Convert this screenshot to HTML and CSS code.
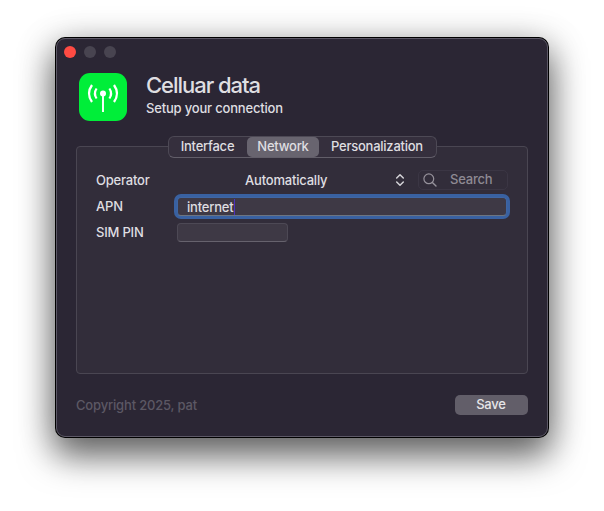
FILE: index.html
```html
<!DOCTYPE html>
<html lang="en">
<head>
<meta charset="utf-8">
<title>Celluar data</title>
<link rel="stylesheet" href="styles.css">
</head>
<body>
<main class="window">
  <div class="lights"><i class="light close"></i><i class="light"></i><i class="light"></i></div>
  <header class="header">
    <svg class="logo" viewBox="0 0 48 48" width="48" height="48">
      <rect width="48" height="48" rx="11" fill="#00ee39"/>
      <g fill="none" stroke="#fff" stroke-width="2">
        <path d="M24 20V39" stroke-width="1.9"/>
        <path d="M17.600 15.500Q14.200 20.500 17.600 25.500M30.400 15.500Q33.800 20.500 30.400 25.500" stroke-width="2.200"/>
        <path d="M13 12Q7 20.500 13 29M35 12Q41 20.500 35 29" stroke-width="2.300"/>
      </g>
      <circle cx="24" cy="20.500" r="3" fill="#fff"/>
    </svg>
    <div class="titles">
      <h1>Celluar data</h1>
      <p>Setup your connection</p>
    </div>
  </header>
  <section class="panel">
    <nav class="tabs">
      <span class="tab interface">Interface</span>
      <span class="tab active">Network</span>
      <span class="tab personal">Personalization</span>
    </nav>
    <div class="form">
      <div class="row">
        <label class="label">Operator</label>
        <div class="select">
          <span>Automatically</span>
          <svg viewBox="0 0 10 14" width="10" height="14"><path d="M1.700 5L5 1.800L8.300 5M1.700 9L5 12.200L8.300 9" fill="none" stroke="#d5d4d8" stroke-width="1.500" stroke-linecap="round" stroke-linejoin="round"/></svg>
        </div>
        <div class="search">
          <svg viewBox="0 0 14 14" width="14" height="14"><path d="M9.400 9.400L13 13" stroke="#96929b" stroke-width="1.400" stroke-linecap="round"/><circle cx="5.800" cy="5.800" r="4.900" fill="none" stroke="#96929b" stroke-width="1.200"/></svg>
          <span>Search</span>
        </div>
      </div>
      <div class="row">
        <label class="label">APN</label>
        <div class="input focused"><span>internet</span><i class="caret"></i></div>
      </div>
      <div class="row">
        <label class="label">SIM PIN</label>
        <div class="input"></div>
      </div>
    </div>
  </section>
  <footer class="footer">
    <span class="copyright">Copyright 2025, pat</span>
    <button class="save">Save</button>
  </footer>
</main>
</body>
</html>
```
FILE: styles.css
```css
* { box-sizing: border-box; }
body {
  margin: 0;
  height: 511px;
  overflow: hidden;
  padding: 38px 56px;
  background: #fff;
  font: 500 13px/16px Inter, "Liberation Sans", sans-serif;
  letter-spacing: -.2px;
  color: #dfdee1;
  white-space: nowrap;
}
.window {
  display: flex;
  flex-direction: column;
  width: 492px;
  height: 399px;
  padding: 7px 19px 21px;
  border: 1px solid #5c5866;
  border-radius: 9px;
  background: #2b2634;
  box-shadow: 0 0 0 1px #000, 0 18px 34px 2px rgba(0, 0, 0, .5), 0 6px 36px rgba(0, 0, 0, .3);
}
.lights { display: flex; gap: 8px; margin-left: -12px; }
.light { width: 12px; height: 12px; border-radius: 50%; background: #484450; }
.close { background: #ff4b43; }
.header { display: flex; margin: 15px 0 0 3px; height: 48px; }
.titles { padding-left: 19px; }
.titles h1 { margin: -1px 0 0; font-size: 22px; line-height: 26px; font-weight: 450; letter-spacing: -1.03px; }
.titles p { margin: 2px 0 0; letter-spacing: -.18px; }
.panel {
  height: 228px;
  margin-top: 25px;
  border: 1px solid #4a4652;
  border-radius: 4px;
  background: #322d3a;
}
.tabs {
  display: flex;
  width: 269px;
  height: 22px;
  margin: -11px auto 0;
  border: 1px solid #4d4955;
  border-bottom-color: #625e69;
  border-radius: 6px;
  background: #352f3d;
}
.tab { height: 20px; line-height: 19px; width: 78px; text-align: center; letter-spacing: -.25px; }
.tab.active { width: 72px; padding-left: 1px; border-radius: 5px; background: #68646f; }
.tab.personal { width: 117px; }
.form { display: flex; flex-direction: column; gap: 6px; padding: 12px 19px 0; }
.row { display: flex; align-items: center; height: 20px; }
.label { width: 81px; flex: none; }
.select { display: flex; align-items: center; justify-content: space-between; width: 228px; padding-left: 68px; }
.search {
  display: flex;
  align-items: center;
  gap: 13px;
  width: 90px;
  height: 20px;
  margin-left: 13px;
  padding-left: 4px;
  border: 1px solid #3b3644;
  border-radius: 5px;
  color: #8e8a93;
}
.search span { margin-top: -2px; }
.input {
  display: flex;
  align-items: center;
  align-self: flex-end;
  height: 19px;
  width: 111px;
  border: 1px solid #4d4955;
  border-bottom-color: #66626d;
  border-radius: 4px;
  background: #3e3945;
}
.focused { width: 330px; padding-left: 9px; box-shadow: 0 0 0 3px #3961a1; border-color: #3f66a3; border-bottom-color: #6c7582; }
.caret { width: 1px; height: 16px; background: #4b31c0; }
.footer { display: flex; justify-content: space-between; align-items: center; margin-top: 21px; height: 20px; }
.copyright { color: #5c5864; letter-spacing: -.17px; }
.save {
  width: 73px;
  height: 20px;
  padding: 0 1px 2px 0;
  border: 0;
  border-radius: 5px;
  background: #625e69;
  color: #e6e5e8;
  font: inherit;
  letter-spacing: -.2px;
}
```
